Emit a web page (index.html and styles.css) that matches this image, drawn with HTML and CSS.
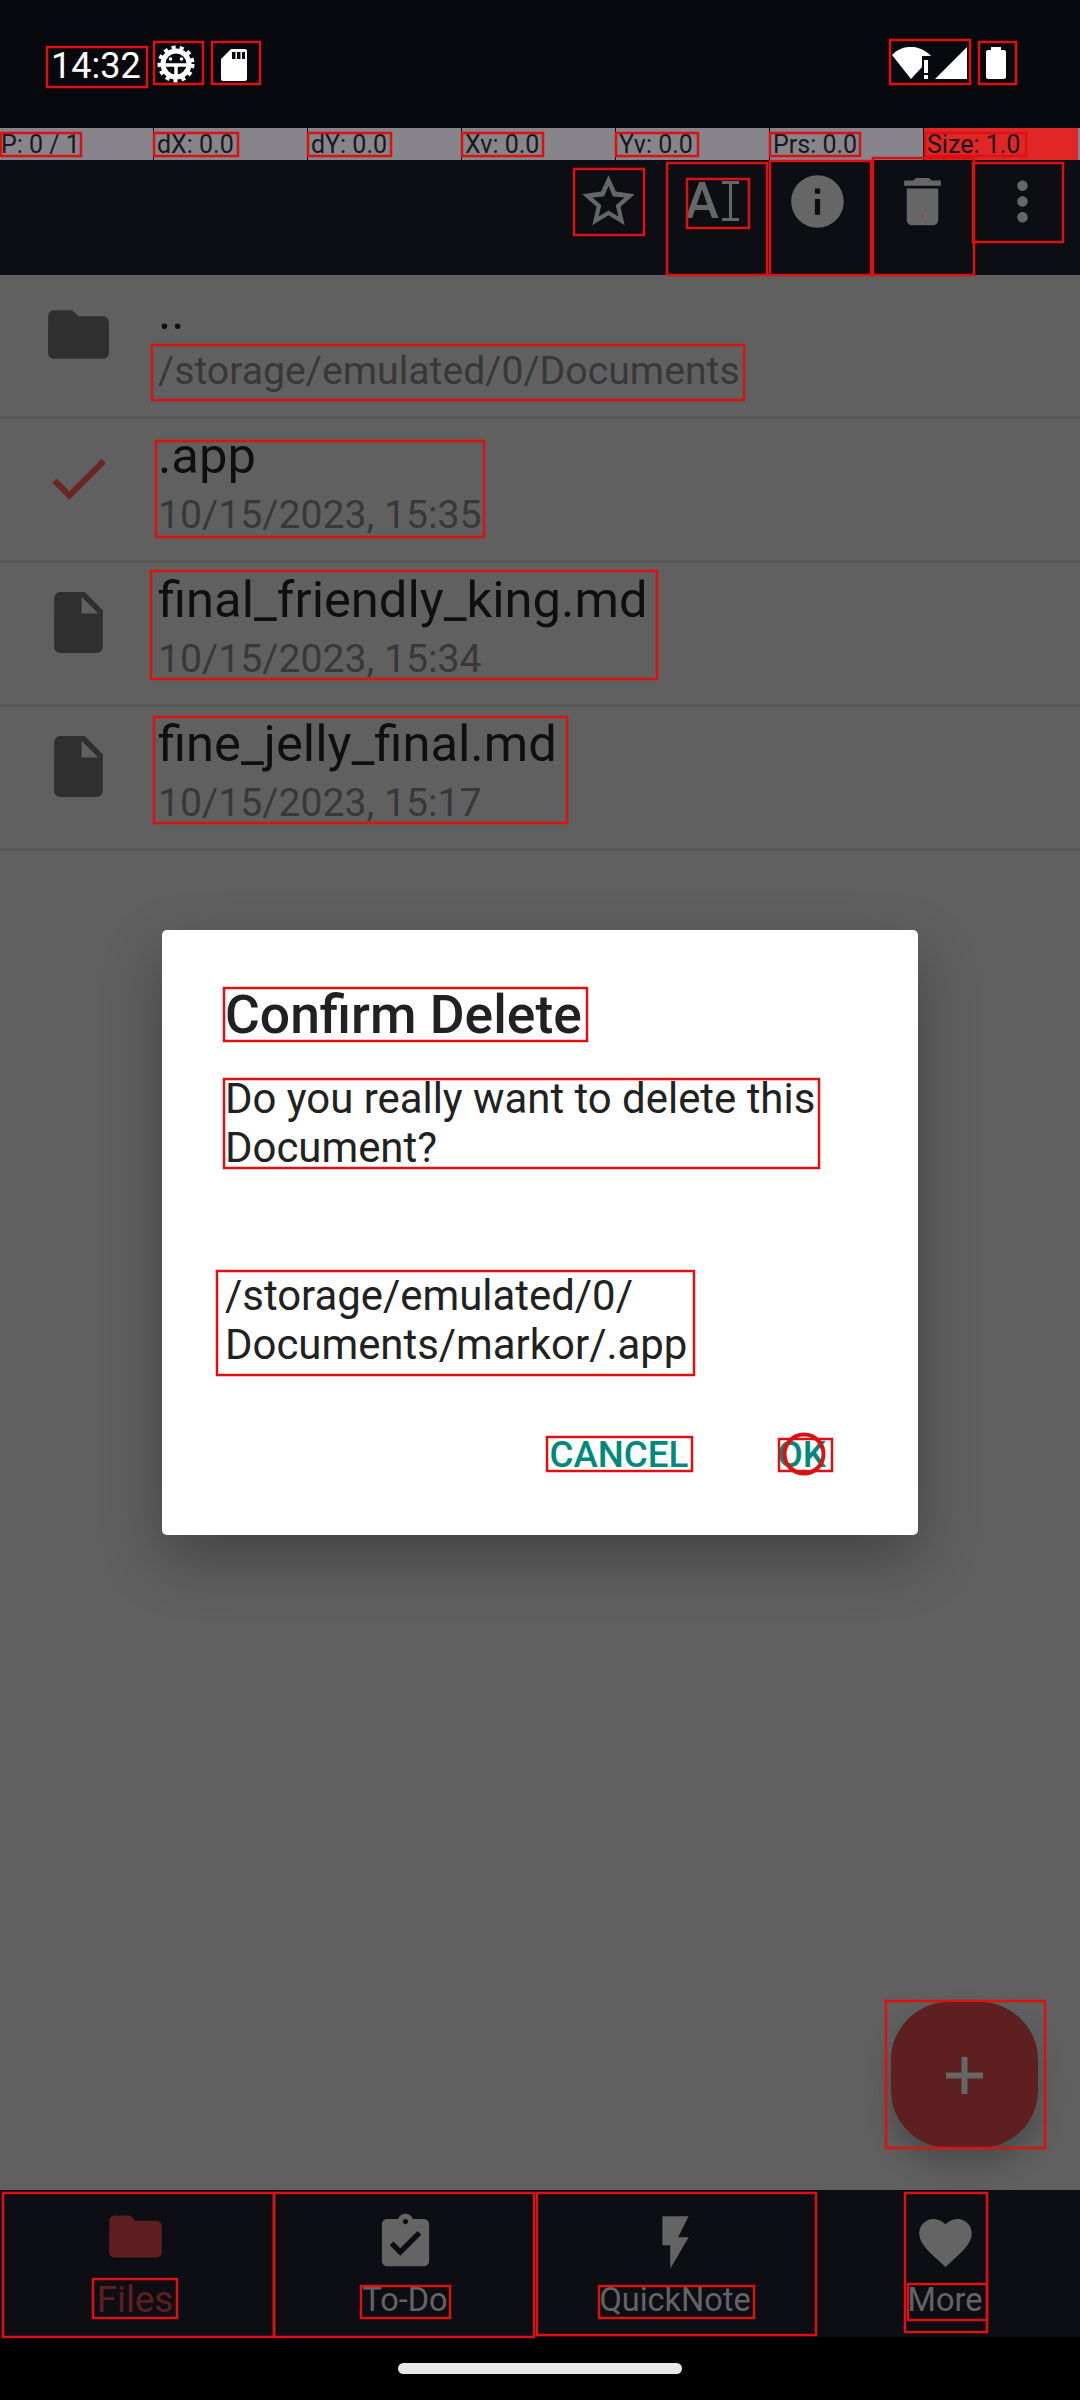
FILE: index.html
```html
<!DOCTYPE html>
<html lang="en">
<head>
  <meta charset="UTF-8" />
  <meta name="viewport" content="width=device-width, initial-scale=1" />
  <title>Confirm Delete</title>
  <link rel="stylesheet" href="styles.css">
</head>
<body>
  <div class="screen">
    <div class="status-bar">
      <span class="time">14:32</span>
      <svg class="gear" viewBox="0 0 38 38" width="38" height="38">
        <circle cx="19" cy="19" r="16.500" fill="none" stroke="#fff" stroke-width="4" stroke-dasharray="4 4.100"/>
        <circle cx="19" cy="19" r="13" fill="none" stroke="#fff" stroke-width="5"/>
        <path d="M6 20h26M19 20v13" stroke="#fff" stroke-width="3.500" fill="none"/>
        <circle cx="13.500" cy="14" r="1.800" fill="#fff"/>
        <circle cx="24.500" cy="14" r="1.800" fill="#fff"/>
      </svg>
      <svg class="sd" viewBox="0 0 26 32" width="26" height="32">
        <path fill-rule="evenodd" fill="#fff" d="M10 0h14c1.100 0 2 .9 2 2v28c0 1.100-.9 2-2 2H2c-1.100 0-2-.9-2-2V10L10 0zM11 3v7h3.500V3H11zM16 3v7h3.500V3H16zM21 3v7h3V3h-3z"/>
      </svg>
      <div class="status-right">
        <svg class="wifi" viewBox="0 0 76 33" width="76" height="33">
          <path fill="#fff" d="M0 8C10-3 28-3 39 9L30 9V20L19 32z"/>
          <path fill="#fff" d="M32 13h4v13h-4zM32 28h4v4h-4zM75 0V32H43z"/>
        </svg>
        <svg class="battery" viewBox="0 0 20 32" width="20" height="32">
          <path fill="#fff" d="M5 0h10v3h3c1.100 0 2 .9 2 2v25c0 1.100-.9 2-2 2H2c-1.100 0-2-.9-2-2V5c0-1.100.9-2 2-2h3z"/>
        </svg>
      </div>
    </div>

    <div class="pointer-bar">
      <span class="pointer-cell pointer-first">P: 0 / 1</span>
      <span class="pointer-cell">dX: 0.0</span>
      <span class="pointer-cell">dY: 0.0</span>
      <span class="pointer-cell">Xv: 0.0</span>
      <span class="pointer-cell">Yv: 0.0</span>
      <span class="pointer-cell">Prs: 0.0</span>
      <span class="pointer-cell pointer-size">Size: 1.0</span>
    </div>

    <div class="toolbar">
      <div class="tool tool-star">
        <svg class="icon-24" viewBox="0 0 24 24"><path d="M22 9.240l-7.190-1.030L12 2 9.190 8.220 2 9.240l5.460 4.730L5.820 21 12 17.270 18.180 21l-1.630-7.030L22 9.240zM12 15.400l-3.760 2.270 1-4.280-3.320-2.880 4.380-.38L12 6.100l1.710 4.040 4.380.38-3.320 2.880 1 4.280L12 15.400z"/></svg>
      </div>
      <div class="tool tool-text">
        <span class="ai-letter">A</span>
        <svg class="ai-beam" viewBox="0 0 17 40" width="17" height="40"><path d="M0 1.500h17M0 38.500h17M8.500 1.500v37" fill="none" stroke="#666" stroke-width="3"/></svg>
      </div>
      <div class="tool tool-info">
        <svg class="icon-24" viewBox="0 0 24 24"><path d="M12 2C6.480 2 2 6.480 2 12s4.480 10 10 10 10-4.480 10-10S17.520 2 12 2zm1 15h-2v-6h2v6zm0-8h-2V7h2v2z"/></svg>
      </div>
      <div class="tool tool-trash">
        <svg class="icon-24" viewBox="0 0 24 24"><path d="M6 19c0 1.100.9 2 2 2h8c1.100 0 2-.9 2-2V7H6v12zM19 4h-3.500l-1-1h-5l-1 1H5v2h14V4z"/></svg>
      </div>
      <div class="tool tool-more">
        <svg class="icon-24" viewBox="0 0 24 24"><path d="M12 8c1.100 0 2-.9 2-2s-.9-2-2-2-2 .9-2 2 .9 2 2 2zm0 2c-1.100 0-2 .9-2 2s.9 2 2 2 2-.9 2-2-.9-2-2-2zm0 6c-1.100 0-2 .9-2 2s.9 2 2 2 2-.9 2-2-.9-2-2-2z"/></svg>
      </div>
    </div>

    <div class="content">
      <div class="row">
        <svg class="row-icon" viewBox="0 0 24 24"><path d="M10 4H4c-1.100 0-1.990.9-1.990 2L2 18c0 1.100.9 2 2 2h16c1.100 0 2-.9 2-2V8c0-1.100-.9-2-2-2h-8l-2-2z"/></svg>
        <div class="row-text">
          <div class="row-name">..</div>
          <div class="row-sub">/storage/emulated/0/Documents</div>
        </div>
      </div>
      <div class="row">
        <svg class="row-icon row-check" viewBox="0 0 24 24"><path d="M9 16.200L4.800 12l-1.400 1.400L9 19 21 7l-1.400-1.400L9 16.200z"/></svg>
        <div class="row-text">
          <div class="row-name">.app</div>
          <div class="row-sub">10/15/2023, 15:35</div>
        </div>
      </div>
      <div class="row">
        <svg class="row-icon" viewBox="0 0 24 24"><path fill-rule="evenodd" d="M6 2c-1.100 0-1.990.9-1.990 2L4 20c0 1.100.89 2 1.990 2H18c1.100 0 2-.9 2-2V8l-6-6H6zm7 7V3.500L18.500 9H13z"/></svg>
        <div class="row-text">
          <div class="row-name">final_friendly_king.md</div>
          <div class="row-sub">10/15/2023, 15:34</div>
        </div>
      </div>
      <div class="row">
        <svg class="row-icon" viewBox="0 0 24 24"><path fill-rule="evenodd" d="M6 2c-1.100 0-1.990.9-1.990 2L4 20c0 1.100.89 2 1.990 2H18c1.100 0 2-.9 2-2V8l-6-6H6zm7 7V3.500L18.500 9H13z"/></svg>
        <div class="row-text">
          <div class="row-name">fine_jelly_final.md</div>
          <div class="row-sub">10/15/2023, 15:17</div>
        </div>
      </div>
    </div>

    <div class="bottom-nav">
      <div class="nav-item nav-active">
        <svg class="icon-24" viewBox="0 0 24 24"><path d="M10 4H4c-1.100 0-1.990.9-1.990 2L2 18c0 1.100.9 2 2 2h16c1.100 0 2-.9 2-2V8c0-1.100-.9-2-2-2h-8l-2-2z"/></svg>
        <span class="nav-label">Files</span>
      </div>
      <div class="nav-item">
        <svg class="icon-24" viewBox="0 0 24 24"><path fill-rule="evenodd" d="M19 3h-4.180C14.400 1.840 13.300 1 12 1c-1.300 0-2.400.84-2.820 2H5c-1.100 0-2 .9-2 2v14c0 1.100.9 2 2 2h14c1.100 0 2-.9 2-2V5c0-1.100-.9-2-2-2zm-7 0c.55 0 1 .45 1 1s-.45 1-1 1-1-.45-1-1 .45-1 1-1zm-2 14l-4-4 1.410-1.410L10 14.170l6.590-6.590L18 9l-8 8z"/></svg>
        <span class="nav-label">To-Do</span>
      </div>
      <div class="nav-item">
        <svg class="icon-24" viewBox="0 0 24 24"><path d="M7 2v11h3v9l7-12h-4l4-8z"/></svg>
        <span class="nav-label">QuickNote</span>
      </div>
      <div class="nav-item">
        <svg class="icon-24" viewBox="0 0 24 24"><path d="M12 21.350l-1.450-1.320C5.400 15.360 2 12.280 2 8.500 2 5.420 4.420 3 7.500 3c1.740 0 3.340.81 4.500 2.090C13.160 3.810 14.760 3 16.500 3 19.580 3 22 5.420 22 8.500c0 3.780-3.400 6.860-8.550 11.540L12 21.350z"/></svg>
        <span class="nav-label">More</span>
      </div>
    </div>

    <div class="gesture-area"><div class="home-pill"></div></div>

    <div class="fab">
      <svg class="fab-plus" viewBox="0 0 37 37" width="37" height="37"><path d="M15.500 0h6v15.500H37v6H21.500V37h-6V21.500H0v-6h15.500z"/></svg>
    </div>

    <div class="dialog">
      <h2 class="dialog-title">Confirm Delete</h2>
      <p class="dialog-text">Do you really want to delete this<br>Document?</p>
      <p class="dialog-text dialog-path">/storage/emulated/0/<br>Documents/markor/.app</p>
      <div class="dialog-actions">
        <span class="dialog-btn">CANCEL</span>
        <span class="dialog-btn">OK</span>
      </div>
    </div>

    <!-- debug boxes drawn on top of the screen -->
    <svg class="marks" viewBox="0 0 1080 2400" width="1080" height="2400">
      <g fill="none" stroke="#dc1212" stroke-width="2.500">
        <rect x="47" y="47" width="100" height="40"/>
        <rect x="154" y="42" width="49" height="42"/>
        <rect x="212" y="42" width="48" height="42"/>
        <rect x="890" y="40" width="80" height="44"/>
        <rect x="979" y="42" width="37" height="42"/>

        <rect x="1" y="133" width="80" height="23"/>
        <rect x="154" y="133" width="84" height="23"/>
        <rect x="308" y="133" width="83" height="23"/>
        <rect x="462" y="133" width="81" height="23"/>
        <rect x="616" y="133" width="82" height="23"/>
        <rect x="770" y="133" width="90" height="23"/>
        <rect x="925" y="133" width="101" height="23"/>

        <rect x="574" y="169" width="70" height="66"/>
        <rect x="667" y="163" width="100" height="112"/>
        <rect x="687" y="179" width="62" height="49"/>
        <rect x="770" y="161" width="101" height="114"/>
        <rect x="873" y="158" width="101" height="117"/>
        <rect x="973" y="163" width="90" height="79"/>

        <rect x="152" y="345" width="592" height="55"/>
        <rect x="156" y="441" width="328" height="96"/>
        <rect x="151" y="571" width="506" height="108"/>
        <rect x="154" y="717" width="413" height="106"/>

        <rect x="224" y="988" width="363" height="53"/>
        <rect x="224" y="1079" width="595" height="89"/>
        <rect x="217" y="1271" width="477" height="104"/>
        <rect x="547" y="1437" width="145" height="34"/>
        <rect x="779" y="1439" width="53" height="32"/>
        <circle cx="804" cy="1454" r="19.500" stroke-width="4"/>

        <rect x="886" y="2001" width="159" height="147"/>

        <rect x="3" y="2193" width="271" height="144"/>
        <rect x="274" y="2193" width="260" height="144"/>
        <rect x="537" y="2193" width="279" height="142"/>
        <rect x="905" y="2193" width="82" height="139"/>
        <rect x="93" y="2279" width="84" height="39"/>
        <rect x="361" y="2286" width="89" height="32"/>
        <rect x="599" y="2286" width="155" height="32"/>
        <rect x="908" y="2284" width="79" height="36"/>
      </g>
      <circle cx="923" cy="216" r="1" fill="#c22"/>
    </svg>
  </div>
</body>
</html>
```

FILE: styles.css
```css
* {
  box-sizing: border-box;
}
body {
  margin: 0;
  font-family: Roboto, "Noto Sans", sans-serif;
  background: #000;
}
.screen {
  position: relative;
  width: 1080px;
  height: 2400px;
  overflow: hidden;
  display: flex;
  flex-direction: column;
  background: #606060;
}

/* status bar */
.status-bar {
  height: 128px;
  flex: none;
  display: flex;
  align-items: flex-start;
  background: #08090e;
  color: #fff;
  padding: 46px 0 0 51px;
}
.time {
  font-size: 36px;
  line-height: 41px;
  margin-right: 16px;
}
.gear {
  margin-top: -1px;
  margin-right: 26px;
}
.sd {
  margin-top: 3px;
}
.status-right {
  margin-left: auto;
  display: flex;
  gap: 18px;
  padding: 1px 74px 0 0;
}

/* pointer location strip */
.pointer-bar {
  height: 32px;
  flex: none;
  display: grid;
  grid-template-columns: repeat(7, 154px);
  background: #87858b;
  color: #17181c;
  font-size: 25px;
  line-height: 34px;
}
.pointer-cell {
  padding-left: 3px;
  border-right: 1px solid #0c0e14;
  white-space: nowrap;
}
.pointer-first {
  padding-left: 1px;
}
.pointer-size {
  background: #e02626;
  border-right: none;
}

/* app bar */
.toolbar {
  height: 115px;
  flex: none;
  display: flex;
  justify-content: flex-end;
  align-items: flex-start;
  padding: 10px 7px 0 0;
  background: #0c0e14;
}
.tool {
  display: flex;
  justify-content: center;
  fill: #666;
}
.tool-star { width: 107px; }
.tool-text { width: 100px; align-items: flex-start; gap: 3px; }
.tool-info { width: 111px; }
.tool-trash { width: 99px; }
.tool-more { width: 101px; }
.icon-24 {
  width: 63px;
  height: 63px;
  display: block;
}
.ai-letter {
  font-size: 50.600px;
  line-height: 50px;
  font-weight: 500;
  margin-top: 6px;
  color: #666;
}
.ai-beam {
  margin-top: 11px;
}

/* file list */
.content {
  flex: 1;
}
.row {
  height: 144px;
  display: flex;
  align-items: flex-start;
  padding: 23px 0 0 42px;
  border-bottom: 3px solid #575757;
}
.row-icon {
  width: 73px;
  height: 73px;
  flex: none;
  fill: #2f2f2f;
}
.row-check {
  fill: #6b2525;
}
.row-text {
  margin-left: 43px;
  margin-top: -15px;
}
.row-name {
  font-size: 50.700px;
  line-height: 58px;
  color: #0f0f0f;
  white-space: nowrap;
}
.row-sub {
  font-size: 39.200px;
  line-height: 61px;
  color: #383838;
  white-space: nowrap;
}

/* bottom navigation */
.bottom-nav {
  height: 147px;
  flex: none;
  display: grid;
  grid-template-columns: repeat(4, 270px);
  background: #0d0e14;
}
.nav-item {
  display: flex;
  flex-direction: column;
  align-items: center;
  padding-top: 21px;
  fill: #646464;
  color: #646464;
}
.nav-label {
  font-size: 32.500px;
  line-height: 36px;
  margin-top: 8px;
}
.nav-active {
  padding-top: 15px;
  fill: #5d1f1f;
  color: #5d1f1f;
}
.nav-active .nav-label {
  font-size: 36.750px;
  line-height: 42px;
  margin-top: 11px;
}
.gesture-area {
  height: 63px;
  flex: none;
  background: #000;
  padding-top: 26px;
}
.home-pill {
  width: 284px;
  height: 11px;
  margin: 0 auto;
  border-radius: 6px;
  background: #e8e8e8;
}

/* floating things */
.fab {
  position: absolute;
  left: 891px;
  top: 2002px;
  width: 147px;
  height: 146px;
  border-radius: 58px;
  background: #5d1f1f;
  box-shadow: 0 16px 28px rgba(0, 0, 0, 0.22);
  display: flex;
  align-items: center;
  justify-content: center;
  fill: #666;
}
.dialog {
  position: absolute;
  left: 162px;
  top: 930px;
  width: 756px;
  height: 605px;
  padding: 54px 63px 0;
  border-radius: 5px;
  background: #fff;
  color: #212121;
  box-shadow: 0 24px 60px rgba(0, 0, 0, 0.3);
}
.dialog-title {
  margin: 0;
  font-size: 53.400px;
  line-height: 62px;
  font-weight: 500;
}
.dialog-text {
  margin: 28px 0 0;
  font-size: 41.900px;
  line-height: 49px;
}
.dialog-path {
  margin-top: 99px;
}
.dialog-actions {
  display: flex;
  justify-content: flex-end;
  gap: 89px;
  margin-top: 66px;
  padding-right: 29px;
  color: #00897b;
  font-size: 36.750px;
  line-height: 40px;
  font-weight: 500;
}
.marks {
  position: absolute;
  left: 0;
  top: 0;
  pointer-events: none;
}
```
